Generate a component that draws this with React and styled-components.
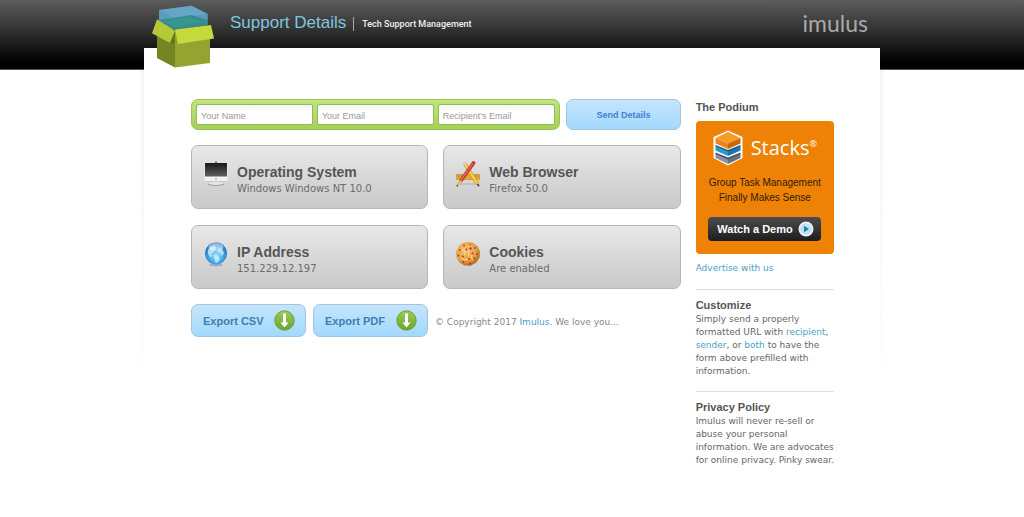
import styled, { createGlobalStyle } from 'styled-components';

const GlobalStyle = createGlobalStyle`
    * {
        box-sizing: border-box;
    }
    body {
        margin: 0;
        background-color: #fff;
        color: #666;
        font: 9px/13px "DejaVu Sans", Verdana, sans-serif;
    }
    h1, h2, h3, p, ul {
        margin: 0;
        padding: 0;
    }
    a {
        color: #4a9fc4;
        text-decoration: none;
    }
`
const helvetica = '"Liberation Sans", Arial, sans-serif';

const TopBar = styled.header`
    height: 70px;
    background: linear-gradient(#5c5c5c, #353535 40%, #000 90%);
    border-bottom: 1px solid #555;
`
const Brand = styled.div`
    display: flex;
    align-items: flex-start;
    max-width: 736px;
    margin: 0 auto;
    padding: 5px 12px 0 8px;
`
const BoxLogo = styled.svg`
    position: relative;
    z-index: 1;
    flex: none;
    width: 62px;
    height: 64px;
    margin-right: 16px;
`
const Title = styled.h1`
    margin-top: 8px;
    color: #7fc6df;
    font: 400 17px/20px ${helvetica};
`
const Tagline = styled.p`
    margin: 12px 0 0 7px;
    padding-left: 8px;
    border-left: 1px solid #aaa;
    color: #f2f2f2;
    font: 500 9px/14px Roboto, sans-serif;
`
const Imulus = styled.a`
    margin: 6px 0 0 auto;
    color: #a9a9a9;
    font: 400 23px/24px Lato, sans-serif;
`
const Sheet = styled.div`
    position: relative;
    display: flex;
    align-items: flex-start;
    gap: 15px;
    max-width: 736px;
    margin: -22px auto 0;
    padding: 51px 46px 40px 47px;
    background-color: #fff;
    &::before,
    &::after {
        content: "";
        position: absolute;
        top: 22px;
        left: -3px;
        width: 3px;
        height: 340px;
        background: linear-gradient(#f5f5f5, #fff);
    }
    &::after {
        left: 100%;
    }
`
const Main = styled.main`
    flex: 1;
    display: flex;
    flex-direction: column;
    gap: 15px;
    min-width: 0;
`
const SendForm = styled.form`
    display: flex;
    gap: 6px;
`
const Fields = styled.div`
    flex: 1;
    display: flex;
    gap: 4px;
    min-width: 0;
    height: 31px;
    padding: 4px;
    border: 1px solid #9cc05a;
    border-radius: 7px;
    background: linear-gradient(#c0e57d, #a5d153);
`
const Input = styled.input`
    flex: 1;
    min-width: 0;
    padding: 2px 4px 0;
    border: 1px solid #94b85a;
    border-radius: 2px;
    background: linear-gradient(#f4f4f4, #fff 40%);
    font: 9px ${helvetica};
    &::placeholder {
        color: #999;
    }
`
const Button = styled.button`
    display: flex;
    align-items: center;
    justify-content: ${({ $split }) => $split ? 'space-between' : 'center'};
    width: 115px;
    height: ${({ $split }) => $split ? 33 : 31}px;
    padding: 0 10px 0 11px;
    border: 1px solid #a3c4dc;
    border-radius: 7px;
    background: linear-gradient(#c5e5fb, #a2d9fe);
    color: ${({ $split }) => $split ? '#3d7fb0' : '#447fd0'};
    font: bold ${({ $split }) => $split ? 11 : 9}px ${helvetica};
    cursor: pointer;
`
const Cards = styled.div`
    display: grid;
    grid-template-columns: 1fr 1fr;
    gap: 16px 15px;
`
const Card = styled.section`
    display: flex;
    gap: 8px;
    min-height: 64px;
    padding: 15px 10px 0 11px;
    border: 1px solid #b6b6b6;
    border-radius: 7px;
    background: linear-gradient(#e8e8e8, #c9c9c9);
`
const CardIcon = styled.svg`
    flex: none;
    width: 26px;
    height: 26px;
`
const CardTitle = styled.h2`
    margin-top: 2px;
    color: #555;
    font: bold 14px/18px ${helvetica};
`
const CardText = styled.p`
    color: #6b6b6b;
    font-size: 10px;
    line-height: 16px;
`
const Exports = styled.div`
    display: flex;
    align-items: center;
    gap: 7px;
`
const Copyright = styled.p`
    padding-top: 4px;
    color: #888;
    white-space: nowrap;
`
const Sidebar = styled.aside`
    flex: 0 0 138px;
`
const Block = styled.section`
    padding: ${({ $first }) => $first ? '0 0 14px' : '7px 0 13px'};
    border-top: ${({ $first }) => $first ? 'none' : '1px solid #ddd'};
`
const SideTitle = styled.h3`
    color: #555;
    font: bold 11px/16px ${helvetica};
`
const SideText = styled.p`
    white-space: nowrap;
`
const Ad = styled.div`
    display: flex;
    flex-direction: column;
    align-items: center;
    height: 133px;
    margin: 6px 0 8px;
    padding-top: 9px;
    border-radius: 4px;
    background-color: #ee8207;
    color: #2e1c05;
    font: 10px/15px ${helvetica};
    text-align: center;
`
const StacksLogo = styled.div`
    display: flex;
    align-items: center;
    gap: 8px;
    margin-bottom: 9px;
    color: #fff;
    font: 500 20px/36px "Open Sans", sans-serif;
    sup {
        font-size: 9px;
        line-height: 1;
    }
`
const DemoButton = styled.a`
    display: flex;
    align-items: center;
    justify-content: space-between;
    width: 113px;
    height: 24px;
    margin-top: 12px;
    padding: 0 7px 0 9px;
    border-radius: 4px;
    background: linear-gradient(#4d4d4d, #1d1d1d);
    color: #fff;
    font: bold 11px ${helvetica};
    white-space: nowrap;
`

const DownIcon = () => (
    <svg width="21" height="21" viewBox="0 0 21 21" aria-hidden="true">
        <defs>
            <linearGradient id="down" x2="0" y2="1">
                <stop stopColor="#9ccb58" />
                <stop offset="1" stopColor="#69a62c" />
            </linearGradient>
        </defs>
        <circle cx="10.5" cy="10.5" r="9.7" fill="url(#down)" stroke="#6d9f3c" />
        <path d="M9 3.5h3v9h2.6l-4.1 5-4.1-5H9z" fill="#fff" />
    </svg>
)

const ScreenIcon = () => (
    <CardIcon viewBox="0 0 26 26" aria-hidden="true">
        <defs>
            <linearGradient id="screen" x2="0" y2="1">
                <stop stopColor="#181818" />
                <stop offset="1" stopColor="#606060" />
            </linearGradient>
        </defs>
        <ellipse cx="13" cy="23.5" rx="8" ry="1.5" fill="#a0a0a0" />
        <ellipse cx="13" cy="22.5" rx="7" ry="1.5" fill="#e8e8e8" />
        <path d="M1.5 2h23v17q0 1.5-1.5 1.5H3q-1.5 0-1.5-1.5z" fill="#f1f1f1" />
        <path d="M2 2h22v13.5H2z" fill="url(#screen)" />
        <path d="M2 20.5h22" stroke="#c4c4c4" strokeWidth=".8" />
        <path d="M13 .5v2" stroke="#444" strokeWidth="1.5" />
        <circle cx="13" cy="18" r=".8" fill="#999" />
    </CardIcon>
)

const ToolsIcon = () => (
    <CardIcon viewBox="0 0 26 26" aria-hidden="true">
        <path d="M4 23h19" stroke="#999" opacity=".6" />
        <path d="M1.5 13.5h23v5h-23z" fill="#e0a934" stroke="#b98428" strokeWidth=".6" />
        <path d="M4 14v2M7 14v2M10 14v2M16 14v2M19 14v2M22 14v2" stroke="#8c601e" strokeWidth=".6" />
        <path d="M10 3l12.5 20" stroke="#c3901d" strokeWidth="3.6" />
        <path d="M10 3l12.5 20" stroke="#f9cf42" strokeWidth="2.4" />
        <path d="M9 1.5l1.5 2.5" stroke="#d8c9b8" strokeWidth="3.5" />
        <path d="M22.5 23l1.5 2.3" stroke="#514027" strokeWidth="1.6" />
        <path d="M6 19.5L18.5 2" stroke="#c2392c" strokeWidth="3.8" strokeLinecap="round" />
        <path d="M6 19L18 2.2" stroke="#ea6a58" strokeWidth="1.3" />
        <path d="M5.5 20.5L2.8 24" stroke="#e2b46c" strokeWidth="2.8" strokeLinecap="round" />
        <path d="M2.6 24.2l-.8 1" stroke="#51331c" strokeWidth="1.4" />
    </CardIcon>
)

const GlobeIcon = () => (
    <CardIcon viewBox="0 0 26 26" aria-hidden="true">
        <defs>
            <radialGradient id="globe" cx=".5" cy=".6" r=".6">
                <stop stopColor="#a5e6fd" />
                <stop offset=".5" stopColor="#4aaeea" />
                <stop offset="1" stopColor="#1766b8" />
            </radialGradient>
        </defs>
        <ellipse cx="13" cy="24" rx="7" ry="1.5" fill="#9bb2c2" />
        <circle cx="13" cy="12.5" r="11" fill="url(#globe)" />
        <path d="M5 9q2-4 7-4l1 2-2 3-1 2-2 1 1 2-2 1-2-3z" fill="#dff5fe" opacity=".7" />
        <path d="M17 7q3 1 4 5l-2 3-2-3-3-1zM11 14l4 1 2 3-3 4-2-1z" fill="#e4f7fe" opacity=".65" />
        <ellipse cx="13" cy="6" rx="7.5" ry="4" fill="#fff" opacity=".5" />
    </CardIcon>
)

const CookieIcon = () => (
    <CardIcon viewBox="0 0 26 26" aria-hidden="true">
        <defs>
            <radialGradient id="cookie" cx=".4" cy=".35" r=".65">
                <stop stopColor="#fac470" />
                <stop offset=".7" stopColor="#e69d44" />
                <stop offset="1" stopColor="#b56a24" />
            </radialGradient>
        </defs>
        <path d="M13 .8l5 1 4.5 3.5 2.5 5.5-.5 6-3.5 5-5.5 3-6-.2-5-3.2L1.3 16 1 10.5l3-5.7L8 1.8z" fill="url(#cookie)" />
        <path d="M7 8l3 2-1 4M14 5l2 3-3 3 1 4M18 12l-2 4 2 3M6 17l4 2 3-1" fill="none" stroke="#ffdc8f" />
        <g fill="#8f4720">
            <circle cx="9" cy="4.5" r=".9" />
            <circle cx="15" cy="3.5" r=".8" />
            <circle cx="20" cy="7" r=".9" />
            <circle cx="5" cy="9" r=".9" />
            <circle cx="11.5" cy="8.5" r=".9" />
            <circle cx="22" cy="13" r=".9" />
            <circle cx="3.5" cy="14.5" r=".9" />
            <circle cx="8" cy="15.5" r=".9" />
            <circle cx="14" cy="18" r=".9" />
            <circle cx="19.5" cy="17.5" r=".9" />
            <circle cx="8.5" cy="21" r=".9" />
            <circle cx="15" cy="22.5" r=".9" />
        </g>
        <circle cx="15.5" cy="7.5" r="1.2" fill="#c5302c" />
        <circle cx="17.5" cy="12.5" r="1" fill="#c5302c" />
    </CardIcon>
)

const StacksIcon = () => (
    <svg width="30" height="36" viewBox="0 0 30 36" aria-hidden="true">
        <path d="M15 .5L29.5 7v21L15 35.5.5 28V7z" fill="#fff" />
        {/* grey layer */}
        <path d="M2.5 23.5L15 29v5L2.5 28z" fill="#8793a3" />
        <path d="M27.5 23.5L15 29v5l12.5-6z" fill="#667181" />
        <path d="M2.5 22.5L15 27.5l12.5-5v1.5L15 29.5 2.5 24z" fill="#44505f" />
        {/* blue layer */}
        <path d="M2.5 15.5L15 21v5L2.5 20.5z" fill="#2798d0" />
        <path d="M27.5 15.5L15 21v5l12.5-5.5z" fill="#1577ad" />
        <path d="M2.5 15L15 20l12.5-5v1L15 21.5 2.5 16z" fill="#16506f" />
        {/* orange layer */}
        <path d="M15 2L27.5 8 15 13.500 2.5 8z" fill="#f59b27" />
        <path d="M2.5 8L15 13.5V19L2.5 13.5z" fill="#ee8513" />
        <path d="M27.5 8L15 13.5V19l12.5-5.5z" fill="#c8680b" />
    </svg>
)

const PlayIcon = () => (
    <svg width="16" height="16" viewBox="0 0 16 16" aria-hidden="true">
        <circle cx="8" cy="8" r="7.5" fill="#e9f3f7" />
        <circle cx="8" cy="8" r="5.8" fill="#c3e1ed" />
        <path d="M6 4.8l5 3.2-5 3.2z" fill="#1786b4" />
    </svg>
)

const details = [
    { title: 'Operating System', text: 'Windows Windows NT 10.0', Icon: ScreenIcon },
    { title: 'Web Browser', text: 'Firefox 50.0', Icon: ToolsIcon },
    { title: 'IP Address', text: '151.229.12.197', Icon: GlobeIcon },
    { title: 'Cookies', text: 'Are enabled', Icon: CookieIcon },
]

const App = () => {
    return (
        <>
            <GlobalStyle />
            <TopBar>
                <Brand>
                    <BoxLogo viewBox="0 0 62 64" aria-hidden="true">
                        {/* carton */}
                        <path d="M5 19l18 7v36.5L5 53z" fill="#748524" />
                        <path d="M23 26l35-4v36l-35 4.5z" fill="#95a430" />
                        {/* glass block rising out of it */}
                        <path d="M7 5L39.5.7 55.7 9v11L23 24.5 7 22z" fill="#5a9cbd" />
                        <path d="M7 5L39.5.7 55.7 9l-33 4z" fill="#6cabc9" opacity=".6" />
                        <path d="M7 15l32.5-5 16.2 5v5L23 24.5 7 22z" fill="#358689" opacity=".85" />
                        <path d="M10 16l28-4 14 5-29 5z" fill="#35a08f" opacity=".6" />
                        <path d="M5 14.3L23.5 26 18 38 0 28.3z" fill="#b5c837" />
                        <path d="M23 24.5L59 20l3 13.5L26 39z" fill="#c3da3d" />
                        <path d="M23 26v13l-5-1z" fill="#647622" />
                    </BoxLogo>
                    <Title>Support Details</Title>
                    <Tagline>Tech Support Management</Tagline>
                    <Imulus href="#imulus">imulus</Imulus>
                </Brand>
            </TopBar>
            <Sheet>
                <Main>
                    <SendForm>
                        <Fields>
                            <Input type="text" placeholder="Your Name" aria-label="Your Name" />
                            <Input type="email" placeholder="Your Email" aria-label="Your Email" />
                            <Input type="email" placeholder="Recipient's Email" aria-label="Recipient's Email" />
                        </Fields>
                        <Button type="submit">Send Details</Button>
                    </SendForm>
                    <Cards>
                        {details.map(({ title, text, Icon }) => (
                            <Card key={title}>
                                <Icon />
                                <div>
                                    <CardTitle>{title}</CardTitle>
                                    <CardText>{text}</CardText>
                                </div>
                            </Card>
                        ))}
                    </Cards>
                    <Exports>
                        <Button type="button" $split>Export CSV<DownIcon /></Button>
                        <Button type="button" $split>Export PDF<DownIcon /></Button>
                        <Copyright>© Copyright 2017 <a href="#imulus">Imulus</a>. We love you...</Copyright>
                    </Exports>
                </Main>
                <Sidebar>
                    <Block $first>
                        <SideTitle>The Podium</SideTitle>
                        <Ad>
                            <StacksLogo>
                                <StacksIcon />
                                <span>Stacks<sup>®</sup></span>
                            </StacksLogo>
                            <p>Group Task Management<br />Finally Makes Sense</p>
                            <DemoButton href="#demo">Watch a Demo<PlayIcon /></DemoButton>
                        </Ad>
                        <a href="#advertise">Advertise with us</a>
                    </Block>
                    <Block>
                        <SideTitle>Customize</SideTitle>
                        <SideText>
                            Simply send a properly<br />
                            formatted URL with <a href="#recipient">recipient</a>,<br />
                            <a href="#sender">sender</a>, or <a href="#both">both</a> to have the<br />
                            form above prefilled with<br />
                            information.
                        </SideText>
                    </Block>
                    <Block>
                        <SideTitle>Privacy Policy</SideTitle>
                        <SideText>
                            Imulus will never re-sell or<br />
                            abuse your personal<br />
                            information. We are advocates<br />
                            for online privacy. Pinky swear.
                        </SideText>
                    </Block>
                </Sidebar>
            </Sheet>
        </>
    )
}

export default App;
